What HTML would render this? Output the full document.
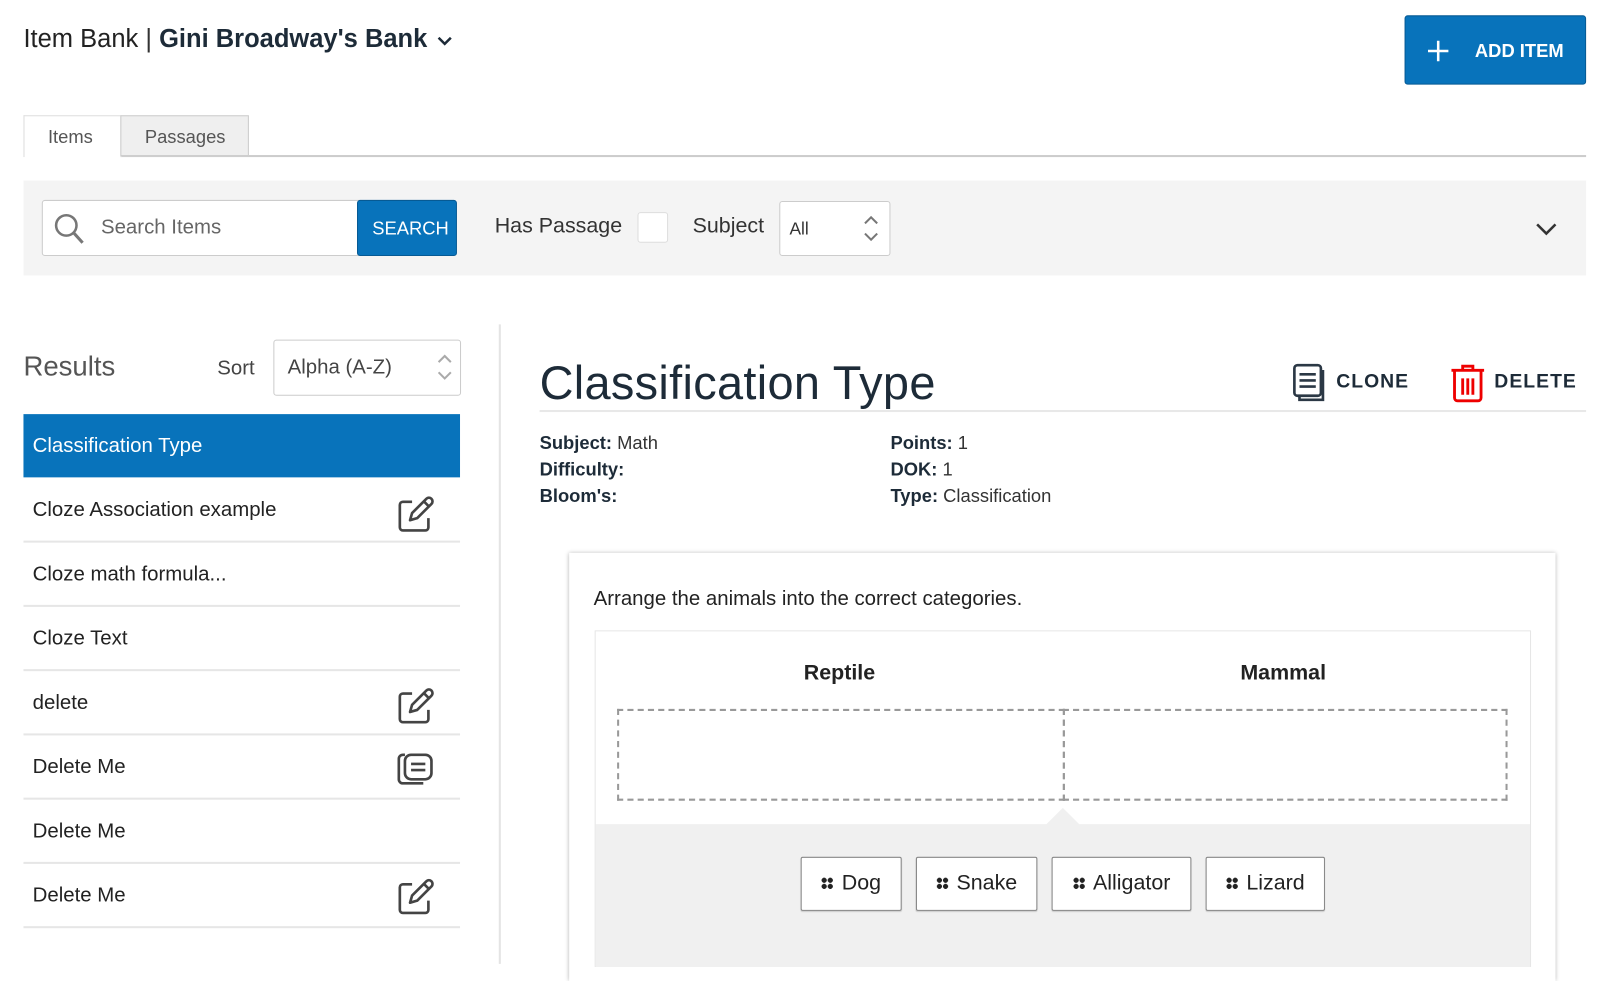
<!DOCTYPE html>
<html><head><style>
*{box-sizing:border-box;margin:0;padding:0}
body{width:1600px;height:945px;overflow:hidden;background:#fff;font-family:"Liberation Sans",sans-serif;color:#1f2d3a;position:relative}
#w{position:absolute;left:0;top:0;width:1570px;height:930px;transform:scale(1.02);transform-origin:0 0}
.a{position:absolute}
.row{position:absolute;left:23px;width:428px;height:63px;border-bottom:2px solid #e6e6e6;font-size:20px;color:#222;padding:20px 0 0 9px}
.chip{position:absolute;top:840px;height:53px;border:1px solid #888;border-radius:2px;background:#fff;font-size:21px;color:#222;padding:13px 0 0 0;text-align:center;box-shadow:0 1px 1px rgba(0,0,0,.15)}
.dots{display:inline-block;width:12px;height:12px;margin-right:8px;vertical-align:0;background:radial-gradient(circle,#222 2.4px,transparent 2.6px) 0 0/6px 6px}
.ico{position:absolute;left:388px}
</style></head><body><div id="w">
<div class="a" style="left:23px;top:24px;font-size:25px;color:#222">Item Bank <span style="color:#333">|</span> <span style="color:#1d2b38;font-weight:600">Gini Broadway's Bank</span>
<svg width="16" height="12" viewBox="0 0 16 12" style="margin-left:2px"><path d="M2 3l6 6 6-6" fill="none" stroke="#1d2b38" stroke-width="2.5"/></svg></div>
<div class="a" style="left:1377px;top:15px;width:178px;height:68px;background:#0873bb;border-radius:3px;color:#fff;font-size:18px;font-weight:600;padding:24px 0 0 68px;border:1px solid #065a94">ADD ITEM</div>
<svg class="a" style="left:1399px;top:39px" width="22" height="22"><path d="M11 1v20M1 11h20" stroke="#fff" stroke-width="2.5"/></svg>

<div class="a" style="left:118px;top:152px;width:1437px;height:2px;background:#ccc"></div>
<div class="a" style="left:23px;top:113px;width:96px;height:41px;border:1px solid #ddd;border-bottom:none;background:#fff;font-size:18px;color:#555;padding:10px 0 0 23px">Items</div>
<div class="a" style="left:118px;top:113px;width:126px;height:40px;border:1px solid #ccc;background:#efefef;font-size:18px;color:#555;padding:10px 0 0 23px">Passages</div>

<div class="a" style="left:23px;top:177px;width:1532px;height:93px;background:#f4f4f4"></div>
<div class="a" style="left:41px;top:196px;width:312px;height:55px;background:#fff;border:1px solid #ccc;border-radius:3px 0 0 3px;font-size:20px;color:#666;padding:15px 0 0 57px">Search Items</div>
<svg class="a" style="left:52px;top:208px" width="32" height="32"><circle cx="13" cy="13" r="10" fill="none" stroke="#777" stroke-width="2.5"/><path d="M20 20l9 10" stroke="#777" stroke-width="3"/></svg>
<div class="a" style="left:350px;top:196px;width:98px;height:55px;background:#0873bb;border:1px solid #065a94;border-radius:3px;color:#fff;font-size:18px;padding:17px 0 0 14px">SEARCH</div>
<div class="a" style="left:485px;top:210px;font-size:21px;color:#333">Has Passage</div>
<div class="a" style="left:625px;top:208px;width:30px;height:30px;background:#fff;border:1px solid #ddd;border-radius:3px"></div>
<div class="a" style="left:679px;top:210px;font-size:21px;color:#333">Subject</div>
<div class="a" style="left:764px;top:197px;width:109px;height:54px;background:#fff;border:1px solid #ccc;border-radius:3px;font-size:17px;color:#333;padding:17px 0 0 9px">All</div>
<svg class="a" style="left:846px;top:210px" width="16" height="28"><path d="M2 9l6-6 6 6M2 19l6 6 6-6" fill="none" stroke="#777" stroke-width="2"/></svg>
<svg class="a" style="left:1505px;top:218px" width="22" height="14"><path d="M2 2l9 9 9-9" fill="none" stroke="#333" stroke-width="2.5"/></svg>

<div class="a" style="left:489px;top:318px;width:2px;height:627px;background:#e4e4e4"></div>

<div class="a" style="left:23px;top:344px;font-size:27px;color:#555">Results</div>
<div class="a" style="left:213px;top:350px;font-size:20px;color:#444">Sort</div>
<div class="a" style="left:268px;top:333px;width:184px;height:55px;border:1px solid #ccc;border-radius:3px;font-size:20px;color:#444;padding:15px 0 0 13px">Alpha (A-Z)</div>
<svg class="a" style="left:428px;top:346px" width="16" height="28"><path d="M2 9l6-6 6 6M2 19l6 6 6-6" fill="none" stroke="#aaa" stroke-width="2"/></svg>

<div class="row" style="top:406px;background:#0873bb;color:#fff;border:none;height:62px">Classification Type</div>
<div class="row" style="top:469px">Cloze Association example</div>
<div class="row" style="top:532px">Cloze math formula...</div>
<div class="row" style="top:595px">Cloze Text</div>
<div class="row" style="top:658px">delete</div>
<div class="row" style="top:721px">Delete Me</div>
<div class="row" style="top:784px">Delete Me</div>
<div class="row" style="top:847px">Delete Me</div>
<svg class="ico" style="top:484px" width="40" height="40" viewBox="0 0 40 40"><path d="M16 8H7a3 3 0 0 0-3 3v22a3 3 0 0 0 3 3h22a3 3 0 0 0 3-3v-9" fill="none" stroke="#444" stroke-width="2.6"/><path d="M14 26l2-7 14-14a3 3 0 0 1 5 5L21 24z" fill="none" stroke="#444" stroke-width="2.6" stroke-linejoin="round"/><path d="M28 8l4 4" stroke="#444" stroke-width="2.6"/></svg>
<svg class="ico" style="top:672px" width="40" height="40" viewBox="0 0 40 40"><path d="M16 8H7a3 3 0 0 0-3 3v22a3 3 0 0 0 3 3h22a3 3 0 0 0 3-3v-9" fill="none" stroke="#444" stroke-width="2.6"/><path d="M14 26l2-7 14-14a3 3 0 0 1 5 5L21 24z" fill="none" stroke="#444" stroke-width="2.6" stroke-linejoin="round"/><path d="M28 8l4 4" stroke="#444" stroke-width="2.6"/></svg>
<svg class="ico" style="top:859px" width="40" height="40" viewBox="0 0 40 40"><path d="M16 8H7a3 3 0 0 0-3 3v22a3 3 0 0 0 3 3h22a3 3 0 0 0 3-3v-9" fill="none" stroke="#444" stroke-width="2.6"/><path d="M14 26l2-7 14-14a3 3 0 0 1 5 5L21 24z" fill="none" stroke="#444" stroke-width="2.6" stroke-linejoin="round"/><path d="M28 8l4 4" stroke="#444" stroke-width="2.6"/></svg>
<svg class="ico" style="top:736px" width="40" height="36" viewBox="0 0 40 36"><path d="M9 4H7a4 4 0 0 0-4 4v20a4 4 0 0 0 4 4h20" fill="none" stroke="#444" stroke-width="2.6"/><rect x="9" y="4" width="26" height="24" rx="6" fill="none" stroke="#444" stroke-width="2.6"/><path d="M15 13h14M15 19h14" stroke="#444" stroke-width="2.6"/></svg>

<div class="a" style="left:529px;top:348px;font-size:46px;color:#1d2b38;letter-spacing:.3px">Classification Type</div>
<div class="a" style="left:529px;top:402px;width:1026px;height:2px;background:#e8e8e8"></div>
<svg class="a" style="left:1266px;top:356px" width="34" height="40" viewBox="0 0 34 40"><rect x="3" y="2" width="26" height="30" rx="3" fill="none" stroke="#2b3845" stroke-width="2.6"/><path d="M29 8h2v28H8v-4" fill="none" stroke="#2b3845" stroke-width="2.6"/><path d="M8 11h16M8 17h16M8 23h16" stroke="#2b3845" stroke-width="2.6"/></svg>
<div class="a" style="left:1310px;top:364px;font-size:19px;font-weight:bold;color:#1d2b38;letter-spacing:1px">CLONE</div>
<svg class="a" style="left:1421px;top:356px" width="36" height="40" viewBox="0 0 36 40"><path d="M2 7h32M13 7V3h10v4" fill="none" stroke="#e00" stroke-width="2.8"/><path d="M5 8v26a3 3 0 0 0 3 3h20a3 3 0 0 0 3-3V8" fill="none" stroke="#e00" stroke-width="2.8"/><path d="M13 15v16M18 15v16M23 15v16" stroke="#e00" stroke-width="2.8"/></svg>
<div class="a" style="left:1465px;top:364px;font-size:19px;font-weight:bold;color:#1d2b38;letter-spacing:1px">DELETE</div>

<div class="a" style="left:529px;top:421px;font-size:18px;line-height:26px;color:#333"><b style="color:#1d2b38">Subject:</b> Math<br><b style="color:#1d2b38">Difficulty:</b><br><b style="color:#1d2b38">Bloom's:</b></div>
<div class="a" style="left:873px;top:421px;font-size:18px;line-height:26px;color:#333"><b style="color:#1d2b38">Points:</b> 1<br><b style="color:#1d2b38">DOK:</b> 1<br><b style="color:#1d2b38">Type:</b> Classification</div>

<div class="a" style="left:558px;top:542px;width:967px;height:420px;background:#fff;box-shadow:0 0 4px rgba(0,0,0,.3)"></div>
<div class="a" style="left:582px;top:576px;font-size:20px;color:#222">Arrange the animals into the correct categories.</div>
<div class="a" style="left:583px;top:618px;width:918px;height:330px;border:1px solid #e6e6e6;background:#fff"></div>
<div class="a" style="left:584px;top:808px;width:916px;height:140px;background:#f0f0f0"></div>
<div class="a" style="left:1025px;top:792px;width:0;height:0;border-left:17px solid transparent;border-right:17px solid transparent;border-bottom:17px solid #f0f0f0"></div>
<div class="a" style="left:788px;top:648px;font-size:21px;font-weight:bold;color:#222">Reptile</div>
<div class="a" style="left:1216px;top:648px;font-size:21px;font-weight:bold;color:#222">Mammal</div>
<div class="a" style="left:605px;top:695px;width:439px;height:90px;border:2px dashed #999"></div>
<div class="a" style="left:1042px;top:695px;width:436px;height:90px;border:2px dashed #999"></div>
<div class="chip" style="left:785px;width:99px"><span class="dots"></span>Dog</div>
<div class="chip" style="left:898px;width:119px"><span class="dots"></span>Snake</div>
<div class="chip" style="left:1031px;width:137px"><span class="dots"></span>Alligator</div>
<div class="chip" style="left:1182px;width:117px"><span class="dots"></span>Lizard</div>
</div></body></html>
